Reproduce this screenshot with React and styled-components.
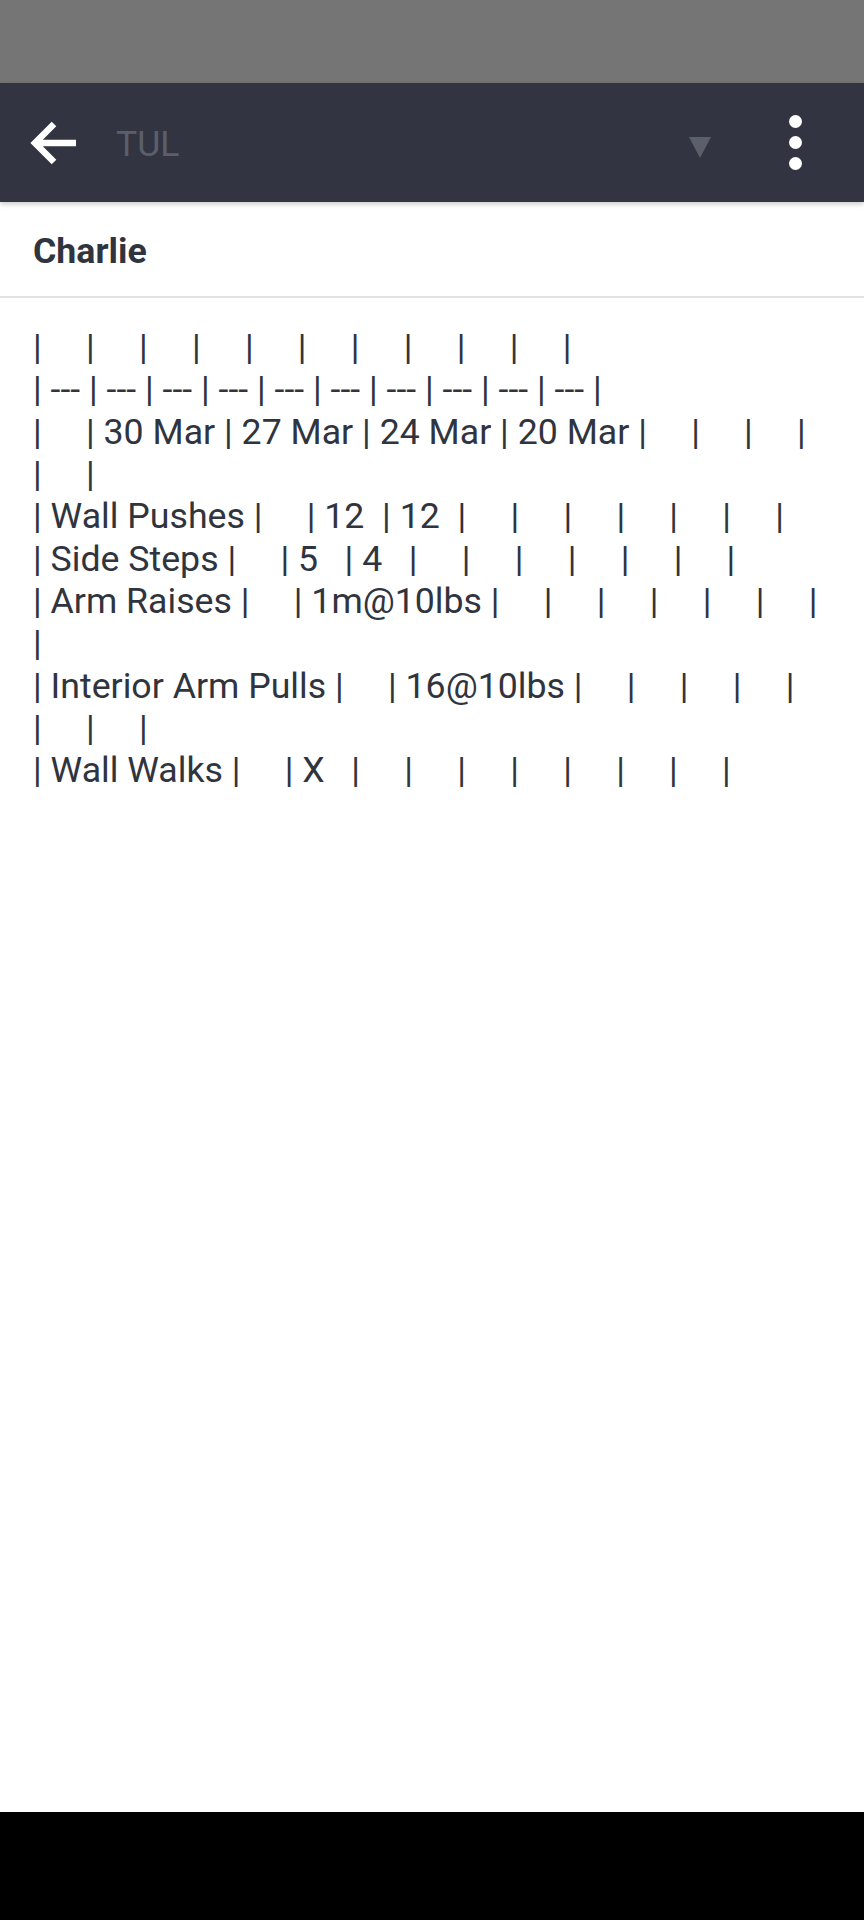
import React from 'react';
import styled, { createGlobalStyle } from 'styled-components';

const rows = [
  ['', '', '', '', '', '', '', '', '', ''],
  ['---', '---', '---', '---', '---', '---', '---', '---', '---', '---'],
  ['', '30 Mar', '27 Mar', '24 Mar', '20 Mar', '', '', '', '', ''],
  ['Wall Pushes', '', '12', '12', '', '', '', '', '', ''],
  ['Side Steps', '', '5', '4', '', '', '', '', '', ''],
  ['Arm Raises', '', '1m@10lbs', '', '', '', '', '', '', ''],
  ['Interior Arm Pulls', '', '16@10lbs', '', '', '', '', '', '', ''],
  ['Wall Walks', '', 'X', '', '', '', '', '', '', ''],
];

// markdown-ish table source, cells padded to 3 chars
const toLine = (cells) => '|' + cells.map((c) => ' ' + c.padEnd(3, ' ') + ' |').join('');

const GlobalStyle = createGlobalStyle`
  html, body {
    margin: 0;
    padding: 0;
    background: #fff;
  }
  body {
    font-family: Roboto, "Noto Sans", "Liberation Sans", sans-serif;
  }
`;

const App = () => {
  return (
    <Screen>
      <GlobalStyle />
      <StatusBar />
      <Toolbar>
        <BackButton aria-label="Back">
          <svg width="48" height="44" viewBox="0 0 48 44">
            <path d="M24 3 L5 22 L24 41 M5 22 H46" fill="none" stroke="#fff" strokeWidth="6.5" />
          </svg>
        </BackButton>
        <Spinner>
          <SpinnerText>TUL</SpinnerText>
          <svg width="22" height="21" viewBox="0 0 22 21">
            <polygon points="0,0 22,0 11,21" fill="#5b5f6a" />
          </svg>
        </Spinner>
        <Overflow aria-label="More options">
          <Dot />
          <Dot />
          <Dot />
        </Overflow>
      </Toolbar>
      <Header>Charlie</Header>
      <Body>
        {rows.map((r, i) => (
          <Line key={i}>{toLine(r)}</Line>
        ))}
      </Body>
      <NavBar />
    </Screen>
  );
};

const Screen = styled.div`
  min-height: 100vh;
  display: flex;
  flex-direction: column;
  background: #fff;
`;

const StatusBar = styled.div`
  height: 83px;
  background: #757575;
`;

const Toolbar = styled.header`
  height: 119px;
  background: #323541;
  display: flex;
  align-items: center;
  padding: 0 43px 0 30px;
  box-shadow: 0 2px 5px rgba(0, 0, 0, 0.22);
  position: relative;
  z-index: 1;
`;

const BackButton = styled.div`
  width: 48px;
  height: 44px;
  display: flex;
  margin-top: 1px;
`;

const Spinner = styled.div`
  flex: 1;
  display: flex;
  align-items: center;
  justify-content: space-between;
  margin-left: 38px;

  svg {
    margin-top: 9px;
  }
`;

const SpinnerText = styled.span`
  font-size: 35.5px;
  line-height: 41px;
  color: #5b5f6a;
  margin-top: 4px;
`;

const Overflow = styled.div`
  width: 52px;
  margin-left: 58px;
  display: flex;
  flex-direction: column;
  align-items: center;
  gap: 8px;
`;

const Dot = styled.span`
  width: 13px;
  height: 13px;
  border-radius: 50%;
  background: #fff;
`;

const Header = styled.div`
  height: 96px;
  box-sizing: border-box;
  padding: 29px 33px 0;
  font-size: 35.7px;
  line-height: 41px;
  font-weight: 700;
  color: #30343e;
  border-bottom: 2px solid #e2e2e2;
`;

const Body = styled.div`
  flex: 1;
  padding: 28px 33px 0;
`;

const Line = styled.p`
  margin: 0;
  font-size: 35.7px;
  line-height: 42.35px;
  color: #30343e;
  white-space: pre-wrap;
`;

const NavBar = styled.div`
  height: 108px;
  background: #000;
`;

export default App;
